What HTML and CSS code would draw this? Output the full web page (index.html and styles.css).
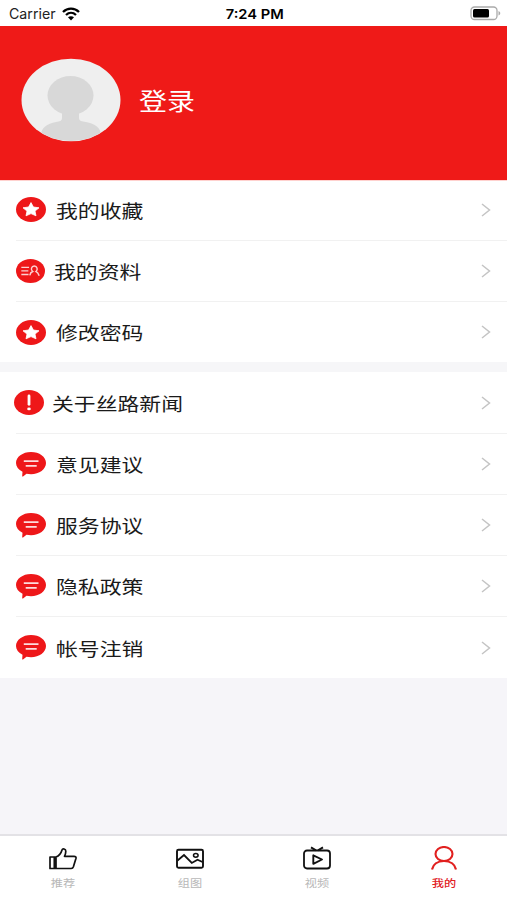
FILE: index.html
```html
<!DOCTYPE html>
<html lang="zh-CN">
<head>
    <meta charset="UTF-8">
    <meta name="viewport" content="width=device-width, initial-scale=1.0">
    <title>我的</title>
    <link rel="stylesheet" href="styles.css">
</head>
<body>
    <!-- shared icons -->
    <svg class="sprite" aria-hidden="true">
        <symbol id="star" viewBox="0 0 30 25" preserveAspectRatio="none">
            <ellipse cx="15" cy="12.5" rx="15" ry="12.5" fill="#ee1719"/>
            <path d="M15 5.6l2.4 4.4 5.6.8-4 3.3 1 4.7-5-2.2-5 2.2 1-4.7-4-3.3 5.6-.8z" fill="#fff" stroke="#fff" stroke-width=".8" stroke-linejoin="round"/>
        </symbol>
        <symbol id="profile" viewBox="0 0 30 25" preserveAspectRatio="none">
            <ellipse cx="15" cy="12.5" rx="15" ry="12.5" fill="#ee1719"/>
            <path d="M5.5 8.7h8M5.5 12.4h7.3M5.5 16.1h7.5M14.3 17c.3-2.2 1.3-3.400 3-4-2.400-1.800-1.500-5.700 1.600-5.700s4 3.900 1.800 5.700c1.700.7 2.600 2.500 3.300 4.500" fill="none" stroke="#fff" stroke-opacity=".8" stroke-width="1.500"/>
        </symbol>
        <symbol id="about" viewBox="0 0 30 25" preserveAspectRatio="none">
            <ellipse cx="15" cy="12.5" rx="15" ry="12.5" fill="#ee1719"/>
            <path d="M15 6v8.3" stroke="#fff" stroke-width="2.8" stroke-linecap="round"/>
            <ellipse cx="15" cy="18.9" rx="1.8" ry="1.4" fill="#fff"/>
        </symbol>
        <symbol id="chat" viewBox="0 0 30 25" preserveAspectRatio="none">
            <path d="M15 0c8.4 0 15 4.8 15 11s-6.6 11.2-15 11.2c-1.6 0-3.1-.2-4.5-.5-1 .9-2 1.7-3.5 2.7-.6.4-.9.1-.8-.5l.3-4.1C2.4 17.7 0 14.7 0 11.1 0 4.9 6.6 0 15 0z" fill="#ee1719"/>
            <path d="M7.8 9.200h14.700M9.700 13.900h11" stroke="#fff" stroke-opacity=".85" stroke-width="1.700"/>
        </symbol>
        <symbol id="arrow" viewBox="0 0 10 14">
            <path d="M1 1l7.5 6L1 13" fill="none" stroke="#c4c4c4" stroke-width="1.5"/>
        </symbol>
    </svg>

    <div class="status-bar">
        <div class="carrier">
            <span class="carrier-name">Carrier</span>
            <svg class="wifi" width="18" height="14" viewBox="0 0 18 14">
                <path d="M1 5C5.5.5 12.5.5 17 5M4 8c3-2.8 7-2.8 10 0" fill="none" stroke="#000" stroke-width="2.3"/>
                <path d="M6 10.300c1.700-1.500 4.300-1.500 6 0L9 13.500z"/>
            </svg>
        </div>
        <span class="time">7:24 PM</span>
        <svg class="battery" width="31" height="15" viewBox="0 0 31 15">
            <rect x="1" y="1" width="26" height="12.5" rx="3.5" fill="#fff" stroke="#aaa" stroke-width="1.3"/>
            <rect x="3" y="3" width="16" height="8.5" rx="1.5"/>
            <path d="M28.5 5c2.3 1 2.3 3.5 0 4.5z" fill="#aaa"/>
        </svg>
    </div>

    <div class="header">
        <svg class="avatar" width="100" height="84" viewBox="0 0 100 84">
            <clipPath id="face"><ellipse cx="50" cy="42" rx="49" ry="41"/></clipPath>
            <ellipse cx="50" cy="42" rx="49.5" ry="41.3" fill="#efefef"/>
            <g clip-path="url(#face)" fill="#d8d8d8">
                <ellipse cx="49.5" cy="37.5" rx="23" ry="19.5"/>
                <path d="M41 54h17v6c0 3 3 3.5 7 4 9 1.5 15 6 15 13v7H20v-7c0-7 6-11.5 15-13 3.5-.6 6-1 6-4z"/>
            </g>
        </svg>
        <span class="login">登录</span>
    </div>

    <div class="menu">
        <div class="item"><svg class="icon"><use href="#star"/></svg><span class="label">我的收藏</span><svg class="arrow"><use href="#arrow"/></svg></div>
        <div class="item"><svg class="icon icon-small"><use href="#profile"/></svg><span class="label">我的资料</span><svg class="arrow"><use href="#arrow"/></svg></div>
        <div class="item"><svg class="icon"><use href="#star"/></svg><span class="label">修改密码</span><svg class="arrow"><use href="#arrow"/></svg></div>
    </div>

    <div class="menu">
        <div class="item"><svg class="icon icon-about"><use href="#about"/></svg><span class="label">关于丝路新闻</span><svg class="arrow"><use href="#arrow"/></svg></div>
        <div class="item"><svg class="icon"><use href="#chat"/></svg><span class="label">意见建议</span><svg class="arrow"><use href="#arrow"/></svg></div>
        <div class="item"><svg class="icon"><use href="#chat"/></svg><span class="label">服务协议</span><svg class="arrow"><use href="#arrow"/></svg></div>
        <div class="item"><svg class="icon"><use href="#chat"/></svg><span class="label">隐私政策</span><svg class="arrow"><use href="#arrow"/></svg></div>
        <div class="item"><svg class="icon"><use href="#chat"/></svg><span class="label">帐号注销</span><svg class="arrow"><use href="#arrow"/></svg></div>
    </div>

    <div class="tabs">
        <div class="tab">
            <svg width="30" height="26" viewBox="0 0 30 26">
                <path d="M2 11h6v11.5H2zM6.300 11v11.500M8 11c4-1.500 5-3.500 6-7 .6-1.800 3.800-1.300 3.800 1.300 0 2-.5 3.400-1.300 5H26c1.600 0 2.300.7 2 2l-2.600 8.500c-.4 1.200-1 1.700-2.200 1.700H8" fill="none" stroke="#111" stroke-width="1.700" stroke-linejoin="round"/>
            </svg>
            <span>推荐</span>
        </div>
        <div class="tab">
            <svg width="30" height="26" viewBox="0 0 30 26">
                <rect x="2" y="3.7" width="26" height="18" rx="1.5" fill="none" stroke="#111" stroke-width="1.9"/>
                <path d="M2.5 14.5L9 9l7.8 8 5.7-3.2 5 2.2" fill="none" stroke="#111" stroke-width="1.8"/>
                <ellipse cx="20.8" cy="9.3" rx="2.3" ry="1.9" fill="none" stroke="#111" stroke-width="1.5"/>
            </svg>
            <span>组图</span>
        </div>
        <div class="tab">
            <svg width="30" height="26" viewBox="0 0 30 26">
                <rect x="2" y="4.5" width="26" height="18" rx="3" fill="none" stroke="#111" stroke-width="1.8"/>
                <path d="M9 1.400l5 3M21 1.400l-5 3M11.300 9.300v8.500l8.700-4.300z" fill="none" stroke="#111" stroke-width="1.900" stroke-linejoin="round"/>
            </svg>
            <span>视频</span>
        </div>
        <div class="tab active">
            <svg width="30" height="26" viewBox="0 0 30 26">
                <ellipse cx="15" cy="8" rx="8.5" ry="7" fill="none" stroke="#e1201f" stroke-width="2.1"/>
                <path d="M3 23.5c1-5 5.5-8.5 12-8.5s11 3.5 12 8.5" fill="none" stroke="#e1201f" stroke-width="2.2"/>
            </svg>
            <span>我的</span>
        </div>
    </div>
</body>
</html>
```
FILE: styles.css
```css
* {
    box-sizing: border-box;
}

body {
    display: flex;
    flex-direction: column;
    height: 100vh;
    margin: 0;
    overflow: hidden;
    font-family: "Noto Sans CJK SC", sans-serif;
    background-color: #f6f5f9;
}

svg {
    display: block;
    flex-shrink: 0;
}

.sprite {
    display: none;
}

.status-bar {
    display: grid;
    grid-template-columns: 1fr auto 1fr;
    align-items: center;
    height: 26px;
    padding: 1px 6px 0 9px;
    font-family: Inter, sans-serif;
    font-size: 13px;
    background-color: #fff;
}

.carrier {
    display: flex;
    align-items: center;
}

.carrier-name {
    width: 53px;
    font-size: 14.2px;
    color: #222;
}

.time {
    font-weight: 600;
    transform: scaleX(1.13);
}

.battery {
    justify-self: end;
}

.header {
    display: flex;
    align-items: center;
    height: 155px;
    padding: 0 21px 6px;
    border-bottom: 1px solid #ffd2cf;
    background-color: #ef1a18;
}

/* type is set wide, like the rest of the screen */
.login {
    margin-left: 18px;
    font-size: 23.5px;
    color: #fff;
    transform: scaleX(1.19);
    transform-origin: left;
}

.menu {
    background-color: #fff;
}

.menu + .menu {
    border-top: 10px solid #f6f6f8;
}

.item {
    display: flex;
    align-items: center;
    height: 61px;
    margin-left: 16px;
    padding-right: 16px;
    border-bottom: 1px solid #f1f1f1;
}

.header + .menu .item:first-child {
    height: 60px;
    padding-bottom: 2px;
}

.header + .menu .item:last-child {
    height: 60px;
}

.menu + .menu .item:first-child {
    height: 62px;
}

.item:last-child {
    border-bottom: 0;
}

.icon {
    width: 30px;
    height: 25px;
}

.icon-small {
    width: 29px;
    height: 24px;
    margin-right: -1px;
}

.icon-about {
    margin-left: -2px;
    margin-right: -2px;
}

.label {
    margin-left: 10px;
    font-size: 18.2px;
    color: #1a1a1a;
    transform: scaleX(1.2);
    transform-origin: left;
}

.arrow {
    width: 10px;
    height: 14px;
    margin-left: auto;
}

.tabs {
    display: grid;
    grid-template-columns: repeat(4, 1fr);
    height: 66px;
    margin-top: auto;
    padding-top: 10px;
    border-top: 2px solid #e3e2e6;
    background-color: #fff;
}

.tab {
    display: flex;
    flex-direction: column;
    align-items: center;
    font-size: 10px;
    line-height: 14px;
    color: #b8b8b8;
}

.tab span {
    margin-top: 4px;
    transform: scaleX(1.22);
}

.active {
    color: #e1201f;
    font-weight: 500;
}
```
